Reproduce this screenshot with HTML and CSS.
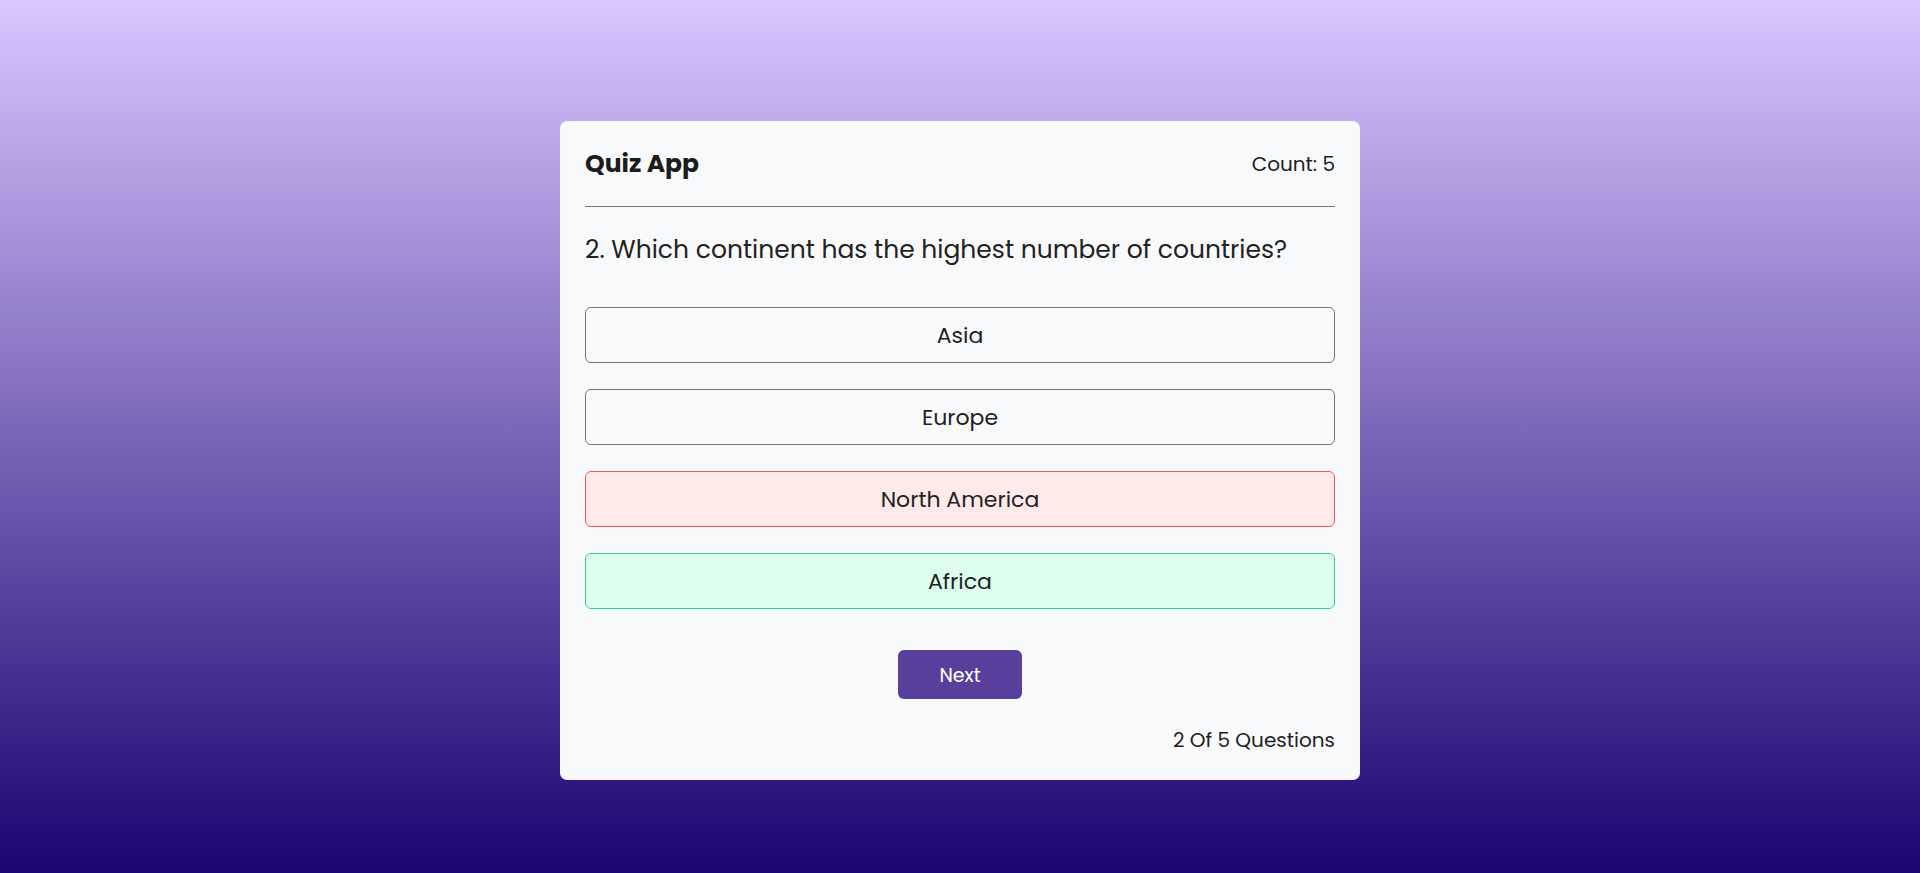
FILE: index.html
```html
<!DOCTYPE html>
<html lang="en">
<head>
<meta charset="utf-8">
<title>Quiz App</title>
<link rel="stylesheet" href="styles.css">
</head>
<body>
<main class="page">
  <section class="card">
    <header class="card-header">
      <h1 class="title">Quiz App</h1>
      <span class="count">Count: 5</span>
    </header>
    <hr class="divider">
    <h2 class="question">2. Which continent has the highest number of countries?</h2>
    <ul class="options">
      <li class="option">Asia</li>
      <li class="option">Europe</li>
      <li class="option option-wrong">North America</li>
      <li class="option option-correct">Africa</li>
    </ul>
    <div class="actions">
      <button class="next-btn" type="button">Next</button>
    </div>
    <p class="progress">2 Of 5 Questions</p>
  </section>
</main>
</body>
</html>
```

FILE: styles.css
```css
* { box-sizing: border-box; }
html, body { margin: 0; padding: 0; }
body {
  min-height: 873px;
  background: linear-gradient(180deg, #d9c7ff 0%, #1a0470 100%);
  font-family: "Poppins", "Noto Sans", "Open Sans", sans-serif;
  color: #222;
}
.page {
  display: flex;
  justify-content: center;
  padding-top: 121px;
}
.card {
  width: 800px;
  background: #f8f9fb;
  border-radius: 7px;
  padding: 26px 25px 26px;
}
.card-header {
  display: flex;
  justify-content: space-between;
  align-items: center;
  height: 34px;
}
.title {
  margin: 0;
  font-size: 25px;
  font-weight: 700;
  color: #1c1c1c;
  line-height: 34px;
}
.count {
  font-size: 20px;
  line-height: 34px;
  color: #222;
}
.divider {
  margin: 25px 0 0;
  border: 0;
  height: 1px;
  background: #777;
}
.question {
  margin: 25px 0 0;
  font-size: 25px;
  font-weight: 400;
  line-height: 36px;
  color: #222;
}
.options {
  list-style: none;
  margin: 39px 0 0;
  padding: 0;
  display: flex;
  flex-direction: column;
  gap: 26px;
}
.option {
  height: 56px;
  display: flex;
  align-items: center;
  justify-content: center;
  padding-top: 1px;
  border: 1px solid #777;
  border-radius: 6px;
  font-size: 22px;
  color: #222;
}
.option-wrong {
  background: #ffe9e9;
  border-color: #ef5656;
}
.option-correct {
  background: #ddfdee;
  border-color: #2fce96;
}
.actions {
  display: flex;
  justify-content: center;
  margin-top: 41px;
}
.next-btn {
  width: 124px;
  height: 49px;
  border: 0;
  border-radius: 6px;
  background: #583f9b;
  color: #fff;
  font-family: inherit;
  font-size: 19px;
  padding-top: 2px;
}
.progress {
  margin: 28px 0 0;
  text-align: right;
  font-size: 20px;
  line-height: 27px;
  color: #222;
}
```
